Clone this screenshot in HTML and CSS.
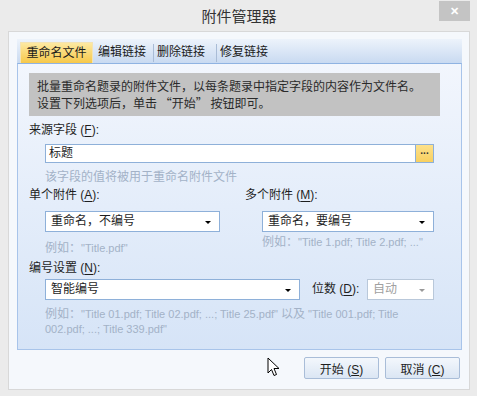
FILE: index.html
```html
<!DOCTYPE html>
<html lang="zh-CN">
<head>
    <meta charset="utf-8">
    <title>附件管理器</title>
    <link rel="stylesheet" href="styles.css">
</head>
<body>
<div class="window">
    <div class="titlebar">
        <div></div>
        <div class="title">附件管理器</div>
        <div class="title-right"><div class="close">✕</div></div>
    </div>

    <div class="client">
        <div class="tabs">
            <div class="tab active">重命名文件</div>
            <div class="tab">编辑链接</div>
            <div class="sep"></div>
            <div class="tab">删除链接</div>
            <div class="sep"></div>
            <div class="tab">修复链接</div>
        </div>

        <div class="panel">
            <div class="desc">
                批量重命名题录的附件文件，以每条题录中指定字段的内容作为文件名。<br>
                设置下列选项后，单击 “开始” 按钮即可。
            </div>

            <div class="label src-label">来源字段 (<u>F</u>):</div>
            <div class="field-row">
                <div class="input">标题</div>
                <div class="browse">...</div>
            </div>
            <div class="hint hint-src">该字段的值将被用于重命名附件文件</div>

            <div class="cols">
                <div class="col col-left">
                    <div class="label">单个附件 (<u>A</u>):</div>
                    <div class="select sel-single">重命名，不编号<span class="arrow"></span></div>
                    <div class="hint hint-ex"><span class="cn">例如：</span>"Title.pdf"</div>
                </div>
                <div class="col">
                    <div class="label">多个附件 (<u>M</u>):</div>
                    <div class="select sel-multi">重命名，要编号<span class="arrow"></span></div>
                    <div class="hint hint-ex"><span class="cn">例如：</span>"Title 1.pdf; Title 2.pdf; ..."</div>
                </div>
            </div>

            <div class="label num-label">编号设置 (<u>N</u>):</div>
            <div class="num-row">
                <div class="select sel-num">智能编号<span class="arrow"></span></div>
                <div class="label digits-label">位数 (<u>D</u>):</div>
                <div class="select sel-digits disabled">自动<span class="arrow"></span></div>
            </div>
            <div class="hint hint-num">
                <div><span class="cn">例如：</span>"Title 01.pdf; Title 02.pdf; ...; Title 25.pdf" <span class="cn">以及</span> "Title 001.pdf; Title</div>
                <div>002.pdf; ...; Title 339.pdf"</div>
            </div>
        </div>

        <div class="buttons">
            <button class="btn">开始 (<u>S</u>)</button>
            <button class="btn">取消 (<u>C</u>)</button>
        </div>
    </div>

    <svg class="cursor" width="13" height="21" viewBox="0 0 13 21">
        <path d="M1 1 L1 16 L4.5 12.5 L7 18.5 L9.5 17.5 L7 11.5 L12 11.5 Z" fill="#fff" stroke="#000" stroke-width="1" stroke-linejoin="round"/>
    </svg>
</div>
</body>
</html>
```

FILE: styles.css
```css
body {
    margin: 0;
    font-family: "Liberation Sans", "Noto Sans CJK SC", sans-serif;
    font-size: 12px;
    color: #1e1e1e;
}
.window {
    position: relative;
    width: 477px;
    height: 396px;
    background: #ebebeb;
    box-sizing: border-box;
    display: flex;
    flex-direction: column;
}
.titlebar {
    height: 31px;
    display: grid;
    grid-template-columns: 1fr auto 1fr;
}
.title {
    font-family: "Noto Sans CJK SC", sans-serif;
    font-size: 15px;
    line-height: 31px;
    color: #333;
    padding-left: 1px;
}
.title-right {
    display: flex;
    justify-content: flex-end;
    padding-right: 7px;
}
.close {
    width: 31px;
    height: 20px;
    margin-top: 1px;
    background: #c4c4c4;
    color: #fff;
    font-size: 11px;
    font-weight: bold;
    line-height: 20px;
    text-align: center;
}
.client {
    margin: 0 7px 6px 8px;
    height: 359px;
    box-sizing: border-box;
    border: 1px solid #d8d8d8;
    background: #f5f8fc;
    padding: 7px 7px 0 8px;
    display: flex;
    flex-direction: column;
}
.tabs {
    height: 24px;
    box-sizing: border-box;
    background: linear-gradient(#edf3fb, #c9daf1);
    display: flex;
    align-items: flex-end;
    padding-left: 3px;
}
.tab {
    height: 21px;
    line-height: 20px;
    padding: 0 6px;
    color: #1a1a1a;
    box-sizing: border-box;
}
.tab.active {
    width: 73px;
    padding: 0;
    text-align: center;
    background: linear-gradient(#fde9a2, #f6c84a);
    border: 1px solid #f3e3b4;
    border-bottom: none;
}
.tab:nth-child(2) {
    width: 60px;
    padding: 0 0 0 5px;
}
.tab:nth-child(4), .tab:nth-child(6) {
    width: 62px;
    padding: 0 0 0 3px;
}
.sep {
    width: 1px;
    height: 18px;
    margin-bottom: 1px;
    background: #a9bcd6;
}
.panel {
    height: 287px;
    box-sizing: border-box;
    border: 1px solid #a8c4ea;
    border-top-color: #8fb3e2;
    background: linear-gradient(#f2f6fd, #d6e4f7);
    padding: 9px 0 0 11px;
}
.desc {
    width: 411px;
    height: 43px;
    box-sizing: border-box;
    background: #c2c2c2;
    padding: 4px 0 0 8px;
    font-family: "Noto Sans CJK SC", sans-serif;
    line-height: 17px;
    color: #2a2a2a;
}
.label {
    line-height: 17px;
}
.label u {
    text-underline-offset: 2px;
}
.src-label {
    margin-top: 6px;
}
.field-row {
    display: flex;
    margin: 5px 0 0 16px;
    height: 19px;
}
.input {
    width: 370px;
    box-sizing: border-box;
    border: 1px solid #8eb0d9;
    border-right: none;
    background: #fff;
    line-height: 17px;
    padding-left: 3px;
}
.browse {
    width: 19px;
    box-sizing: border-box;
    border: 1px solid #8eb0d9;
    background: linear-gradient(#fde18b, #f8d060);
    font-size: 10px;
    font-weight: bold;
    line-height: 12px;
    text-align: center;
    color: #333;
}
.hint {
    color: #a3b2c7;
    line-height: 17px;
    margin-left: 16px;
}
.hint-src {
    margin-top: 6px;
}
.hint-ex, .hint-num {
    font-size: 11px;
}
.hint .cn {
    font-size: 12px;
}
.cols {
    display: flex;
    margin-top: 1px;
}
.col-left {
    width: 216px;
}
.select {
    position: relative;
    height: 21px;
    box-sizing: border-box;
    border: 1px solid #8eb0d9;
    background: #fff;
    line-height: 19px;
    padding-left: 5px;
    margin-left: 16px;
}
.select .arrow {
    position: absolute;
    right: 8px;
    top: 9px;
    border-left: 3px solid transparent;
    border-right: 3px solid transparent;
    border-top: 3px solid #000;
}
.select.disabled {
    color: #a0a0a0;
    border-color: #b9c8da;
}
.select.disabled .arrow {
    border-top-color: #999;
}
.col .select {
    margin-top: 7px;
}
.sel-single {
    width: 175px;
}
.sel-multi {
    width: 172px;
    margin-left: 17px;
}
.hint-ex {
    margin-top: 8px;
}
.col:last-child .hint-ex {
    margin-top: 2px;
    margin-left: 17px;
}
.num-label {
    margin-top: 3px;
}
.num-row {
    display: flex;
    align-items: center;
    margin-top: 2px;
}
.sel-num {
    width: 255px;
}
.digits-label {
    margin-left: 12px;
    width: 55px;
}
.sel-digits {
    width: 67px;
    margin-left: 0;
}
.hint-num {
    margin-top: 7px;
    line-height: 15px;
}
.buttons {
    display: flex;
    justify-content: flex-end;
    gap: 6px;
    margin-top: 7px;
    padding-right: 2px;
}
.btn {
    width: 75px;
    height: 22px;
    border: 1px solid #a9bdd8;
    border-radius: 2px;
    background: linear-gradient(#f3f7fc, #dbe6f4);
    font-family: inherit;
    font-size: 12px;
    color: #1e1e1e;
    padding: 0;
}
.cursor {
    position: absolute;
    left: 267px;
    top: 357px;
}
```
